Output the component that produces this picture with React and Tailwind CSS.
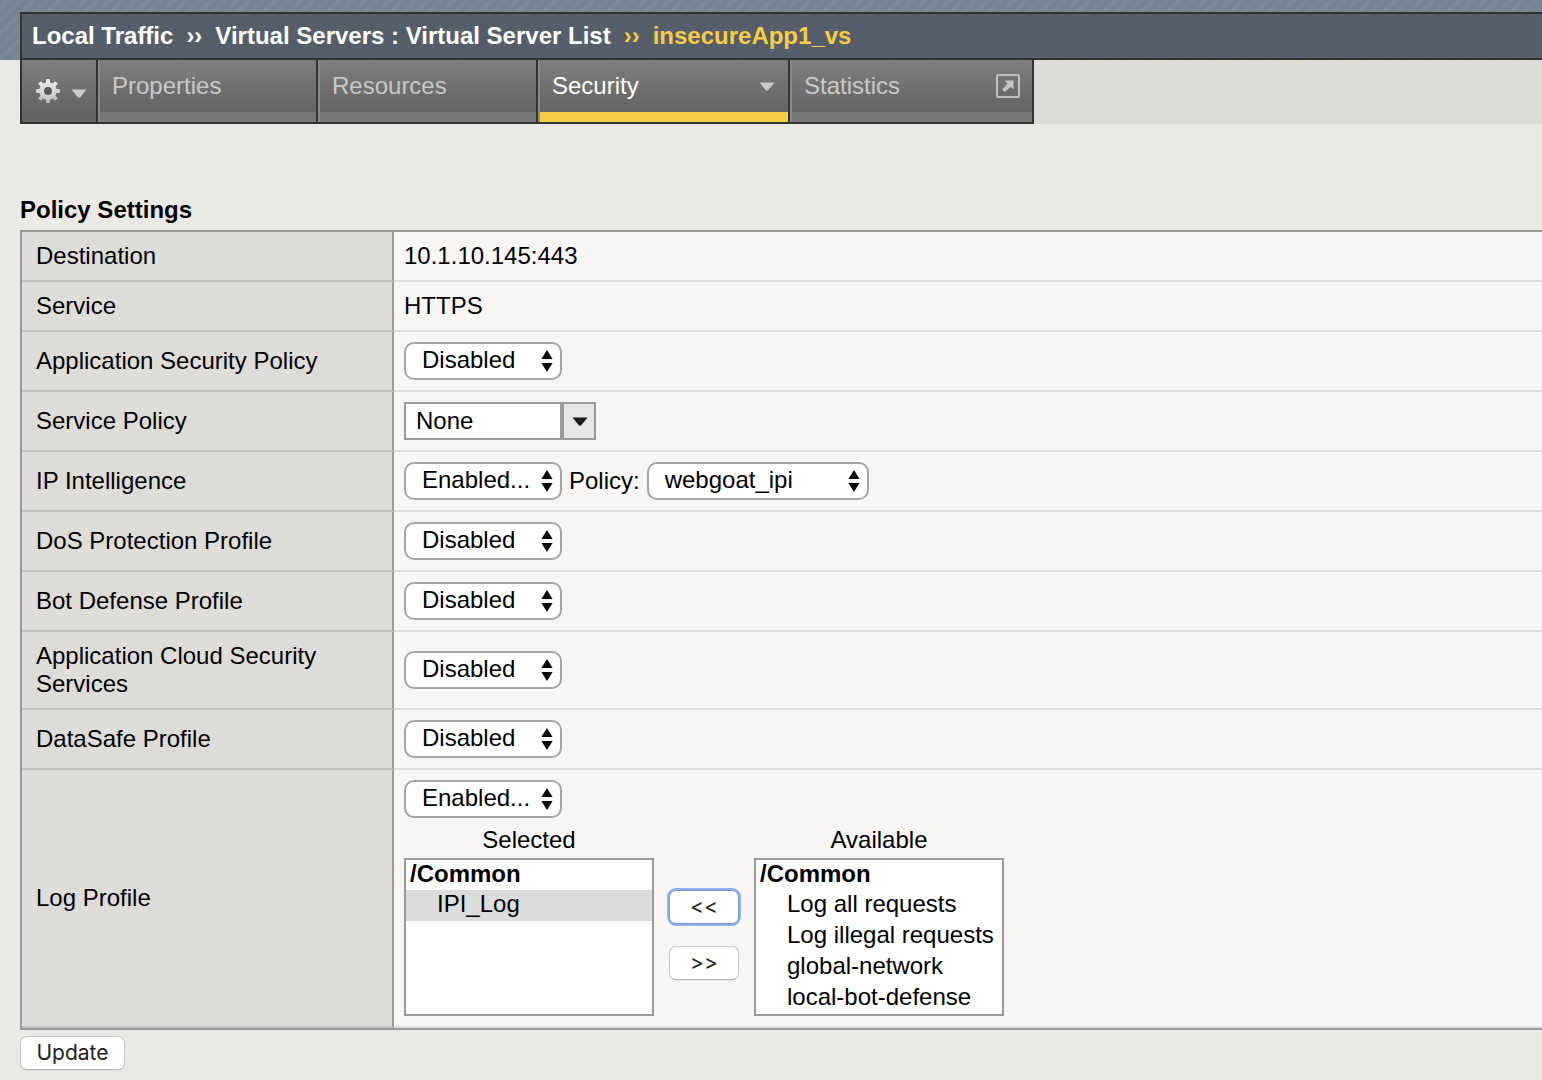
import React from "react";

const SANS = "font-['Liberation_Sans',Arial,sans-serif]";

function GearIcon() {
  const teeth = [0, 45, 90, 135, 180, 225, 270, 315];
  return (
    <svg width="26" height="26" viewBox="0 0 26 26" aria-hidden="true">
      <defs>
        <linearGradient id="gearFill" x1="0" y1="0" x2="0" y2="1">
          <stop offset="0" stopColor="#f4f4f4" />
          <stop offset="1" stopColor="#b8b8b8" />
        </linearGradient>
        <mask id="gearShape">
          <circle cx="13" cy="13" r="8.8" fill="#fff" />
          {teeth.map((a) => (
            <path key={a} d="M10.8 6 L11.2 1 H14.8 L15.2 6 Z" fill="#fff" transform={`rotate(${a} 13 13)`} />
          ))}
          <circle cx="13" cy="13" r="3.9" fill="#000" />
        </mask>
      </defs>
      <circle cx="13" cy="13" r="5" fill="#555" />
      <rect width="26" height="26" fill="url(#gearFill)" mask="url(#gearShape)" />
    </svg>
  );
}

function Triangle({ className }) {
  return (
    <svg width="16" height="9" viewBox="0 0 16 9" className={className} aria-hidden="true">
      <path d="M0.5 0.5 H15.5 L9 8.5 H7 Z" fill="currentColor" />
    </svg>
  );
}

function PopOutIcon() {
  return (
    <svg width="26" height="26" viewBox="0 0 26 26" fill="none" aria-hidden="true">
      <rect x="2" y="2" width="22" height="22" rx="1" stroke="#c0c0c0" strokeWidth="2" />
      <path d="M9.5 7.5 H18.5 V16.5 L15.8 13.8 L9.6 19 L7.2 16.6 L12.4 10.4 Z" fill="#c4c4c4" />
    </svg>
  );
}

function Tab({ children, active, className }) {
  return (
    <a
      href="#"
      className={`flex flex-col border-l-2 border-l-[#8a8a8a] border-r-2 border-r-[#333] ${active ? "text-white" : "text-[#c8c8c8]"} ${className}`}
    >
      <span className="flex h-[52px] items-center justify-between bg-linear-to-b from-[#7f7f7f] to-[#636363] pl-3">
        {children}
      </span>
      <span className={`h-[10px] ${active ? "bg-[#f8cd46]" : "bg-[#777]"}`} />
    </a>
  );
}

function Select({ id, label, options, wide }) {
  return (
    <span className={`relative inline-block ${wide ? "w-[222px]" : "w-[158px]"}`}>
      <select
        id={id}
        aria-label={label}
        className="block h-[38px] w-full appearance-none rounded-[10px] border-2 border-[#a5a5a5] bg-white pb-[2px] pl-4 text-black"
      >
        {options.map((o) => (
          <option key={o}>{o}</option>
        ))}
      </select>
      <svg width="12" height="22" viewBox="0 0 12 22" className="pointer-events-none absolute right-[9px] top-2" aria-hidden="true">
        <path d="M6 0 L11.6 9 H0.4 Z M6 22 L11.6 13 H0.4 Z" fill="#000" />
      </svg>
    </span>
  );
}

function Row({ id, label, children }) {
  return (
    <tr>
      <th
        scope="row"
        className="w-[372px] border-r-2 border-b-2 border-r-[#999] border-b-[#c1c0bc] bg-[#dedcd8] py-[10px] pr-[10px] pl-[14px] text-left font-normal"
      >
        {id ? <label htmlFor={id}>{label}</label> : label}
      </th>
      <td className="border-b-2 border-[#dddddb] bg-[#f7f6f4] p-[10px]">{children}</td>
    </tr>
  );
}

function ListBox({ id, title, items, selected }) {
  return (
    <div className="flex w-[250px] flex-col gap-1">
      <label htmlFor={id} className="text-center">
        {title}
      </label>
      <select
        id={id}
        multiple
        size={5}
        defaultValue={selected}
        className="h-[158px] appearance-none overflow-hidden border-2 border-[#999] bg-white text-black"
      >
        <optgroup label="/Common" className="font-bold leading-[30px] indent-[2px]">
          {items.map((i) => (
            <option
              key={i}
              value={i}
              className="h-[31px] pl-[29px] font-normal leading-[29px] text-black checked:bg-linear-to-b checked:from-[#dcdcdc] checked:to-[#dcdcdc]"
            >
              {i}
            </option>
          ))}
        </optgroup>
      </select>
    </div>
  );
}

const simple = ["Disabled", "Enabled..."];
const enabled = ["Enabled...", "Disabled"];
const pushButton =
  "h-[34px] rounded-[7px] border bg-white font-['Inter',sans-serif] text-[21px] leading-8 text-[#222] shadow-xs";
const plainEdge = "border-[#c8c8c8] border-b-[#b4b4b4]";

export default function App() {
  return (
    <div className={`min-h-screen bg-[#eae9e5] text-[24px] leading-7 text-black ${SANS}`}>
      <header className="bg-[repeating-linear-gradient(135deg,#758493_0px,#758493_3px,#7b8997_5px,#7b8997_7px,#758493_9px)] pt-3 pl-5">
        <nav
          aria-label="Breadcrumb"
          className="flex h-12 items-center gap-[13px] border-y-2 border-l-2 border-[#333] bg-[#3d424d]/60 pl-[10px] font-bold whitespace-nowrap text-white"
        >
          <a href="#">Local Traffic</a>
          <span>››</span>
          <a href="#">Virtual Servers : Virtual Server List</a>
          <span className="text-[#f8cd46]">››</span>
          <span className="text-[#f8cd46]">insecureApp1_vs</span>
        </nav>
      </header>

      <div className="ml-5 flex bg-[#dedcd8]">
        <nav aria-label="Sections" className="flex border-b-2 border-l-2 border-[#333]">
          <button
            type="button"
            aria-label="Options"
            className="flex h-[62px] w-[76px] items-center gap-[10px] border-r-2 border-[#333] bg-linear-to-b from-[#7f7f7f] to-[#636363] to-85% pl-[13px]"
          >
            <GearIcon />
            <Triangle className="mt-1 text-[#c8c8c8]" />
          </button>
          <Tab className="w-[220px]">Properties</Tab>
          <Tab className="w-[220px]">Resources</Tab>
          <Tab className="w-[252px]" active>
            Security
            <Triangle className="mr-[13px] text-[#c8c8c8]" />
          </Tab>
          <Tab className="w-[244px]">
            Statistics
            <span className="mr-[11px]">
              <PopOutIcon />
            </span>
          </Tab>
        </nav>
      </div>

      <main className="pt-[72px] pl-5">
        <h1 className="mb-[6px] font-bold">Policy Settings</h1>
        <table className="w-full border-separate border-spacing-0 border-y-2 border-l-2 border-[#999]">
          <tbody>
            <Row label="Destination">10.1.10.145:443</Row>
            <Row label="Service">HTTPS</Row>
            <Row id="asp" label="Application Security Policy">
              <div className="flex">
                <Select id="asp" options={simple} />
              </div>
            </Row>
            <Row id="sp" label="Service Policy">
              <div className="flex h-[38px] w-[192px] border-2 border-[#999]">
                <input id="sp" defaultValue="None" className="min-w-0 flex-1 bg-white pl-[10px] outline-none" />
                <button
                  type="button"
                  aria-label="Show service policies"
                  className="flex w-[34px] items-center justify-center border-l-4 border-[#999] bg-[#e6e5e3] pl-[2px]"
                >
                  <Triangle className="text-[#1a1a1a]" />
                </button>
              </div>
            </Row>
            <Row id="ipi" label="IP Intelligence">
              <div className="flex items-center gap-[7px]">
                <Select id="ipi" options={enabled} />
                <label htmlFor="ipiPolicy">Policy:</label>
                <Select id="ipiPolicy" options={["webgoat_ipi"]} wide />
              </div>
            </Row>
            <Row id="dos" label="DoS Protection Profile">
              <div className="flex">
                <Select id="dos" options={simple} />
              </div>
            </Row>
            <Row id="bot" label="Bot Defense Profile">
              <div className="flex">
                <Select id="bot" options={simple} />
              </div>
            </Row>
            <Row id="cloud" label="Application Cloud Security Services">
              <div className="flex">
                <Select id="cloud" options={simple} />
              </div>
            </Row>
            <Row id="datasafe" label="DataSafe Profile">
              <div className="flex">
                <Select id="datasafe" options={simple} />
              </div>
            </Row>
            <Row id="log" label="Log Profile">
              <div className="flex">
                <Select id="log" options={enabled} />
              </div>
              <div className="mt-2 flex gap-[15px]">
                <ListBox id="selectedLogs" title="Selected" items={["IPI_Log"]} selected={["IPI_Log"]} />
                <div className="flex flex-col justify-center gap-[22px] pt-7">
                  <button
                    type="button"
                    aria-label="Move to selected"
                    className={`w-[70px] border-[#769ade] ring-2 ring-[#8fb1f0] ${pushButton}`}
                  >
                    &lt;&lt;
                  </button>
                  <button type="button" aria-label="Move to available" className={`w-[70px] ${plainEdge} ${pushButton}`}>
                    &gt;&gt;
                  </button>
                </div>
                <ListBox
                  id="availableLogs"
                  title="Available"
                  items={["Log all requests", "Log illegal requests", "global-network", "local-bot-defense"]}
                  selected={[]}
                />
              </div>
            </Row>
          </tbody>
        </table>
        <button type="button" className={`mt-[6px] w-[105px] ${plainEdge} ${pushButton}`}>
          Update
        </button>
      </main>
    </div>
  );
}
